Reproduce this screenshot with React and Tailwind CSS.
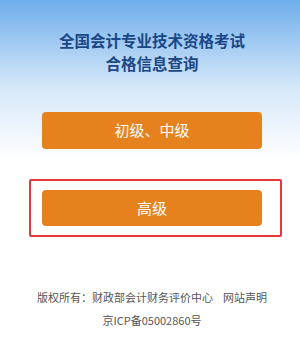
import React from 'react';

const App = () => {
    return (
        <div
            className="w-[300px] h-[353px] pl-[4px] flex flex-col items-center bg-gradient-to-b from-[#6eaeeb] via-[#d6e8f9] via-25% to-white to-45%"
            style={{ fontFamily: '"Microsoft YaHei", "Noto Sans CJK SC", sans-serif' }}
        >
            {/* title */}
            <div className="pt-[29px] text-center text-[15.5px] leading-[23px] font-bold text-[#1b4786]">
                <p>全国会计专业技术资格考试</p>
                <p>合格信息查询</p>
            </div>

            {/* level buttons */}
            <button className="mt-[37px] w-[220px] h-[37px] rounded-[4px] bg-[#e5821e] text-white text-[15px]">
                初级、中级
            </button>

            <div className="mt-[30px] ml-[7px] w-[253px] h-[58px] pl-[11px] border-2 border-[#e23a3b] rounded-[2px] flex items-center">
                <button className="w-[220px] h-[36px] rounded-[4px] bg-[#e5821e] text-white text-[15px]">
                    高级
                </button>
            </div>

            {/* footer */}
            <div className="mt-[49px] text-center text-[11px] leading-[23px] text-[#555]">
                <p>版权所有：财政部会计财务评价中心&nbsp;&nbsp;&nbsp;&nbsp;网站声明</p>
                <p>京ICP备05002860号</p>
            </div>
        </div>
    );
};

export default App;
